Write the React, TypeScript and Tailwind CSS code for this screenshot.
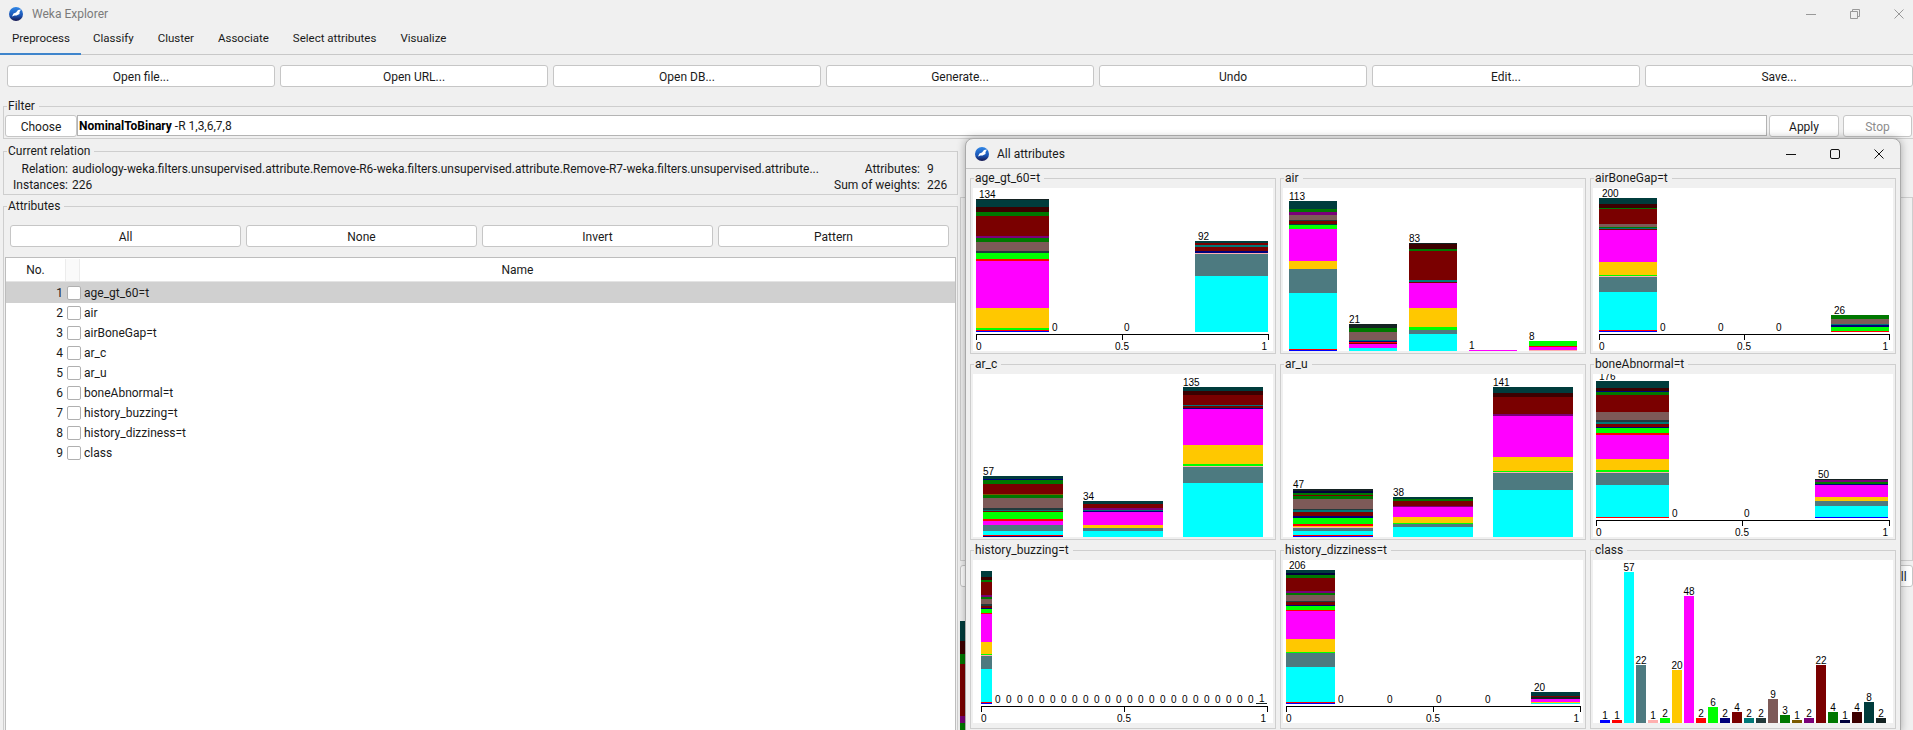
import { clsx } from 'clsx';
import type { ReactNode } from 'react';

// class colours used by the stacked bars
const cy = '#00ffff', tg = '#4d7a80', go = '#ffc800', mg = '#ff00ff', rd = '#ff0000', lm = '#00ff00';
const ma = '#7a0000', br = '#7d5a58', dg = '#007800', pu = '#7a0078', te = '#007878', na = '#00007a';
const dm = '#3c0000', dt = '#003c3c', dk = '#142222', bl = '#0000ff', pk = '#ffafaf', ol = '#7a5a00';
const sl = '#223a3c', nd = '#00003c';

type Seg = [string, number];
type Bar = { x: number; w: number; label?: string; segs: Seg[] };
type Chart = {
  title: string;
  bottom: number;
  dx: number;
  bars: Bar[];
  zeros?: number[];
  axis?: { x0: number; x1: number; mid: number };
  centered?: boolean;
};

const classCounts: [string, string, number][] = [
  [bl, '1', 3], [rd, '1', 3], [cy, '57', 151], [tg, '22', 58], [pk, '1', 3], [lm, '2', 5], [go, '20', 53], [mg, '48', 127],
  [rd, '2', 5], [lm, '6', 16], [na, '2', 5], [ma, '4', 11], [te, '2', 5], [sl, '2', 5], [br, '9', 24], [dg, '3', 8],
  [ol, '1', 3], [pu, '2', 5], [ma, '22', 58], [dg, '4', 11], [nd, '1', 3], [dm, '4', 11], [dt, '8', 21], [dk, '2', 5],
];

const charts: Chart[] = [
  {
    title: 'age_gt_60=t', bottom: 144, dx: 3, zeros: [79, 151], axis: { x0: 3, x1: 295, mid: 149 },
    bars: [
      { x: 3, w: 73, label: '134', segs: [[dk, 1], [dt, 7], [dm, 5], [dg, 4], [ma, 20], [pu, 2], [dg, 4], [br, 9], [sl, 2], [lm, 6], [rd, 2], [mg, 47], [go, 20], [lm, 2], [rd, 1], [bl, 1]] },
      { x: 222, w: 73, label: '92', segs: [[dt, 2], [ma, 2], [te, 2], [ma, 4], [na, 2], [pk, 1], [tg, 22], [cy, 56]] },
    ],
  },
  {
    title: 'air', bottom: 163, dx: 0,
    bars: [
      { x: 6, w: 48, label: '113', segs: [[dt, 8], [dg, 3], [pu, 3], [br, 5], [sl, 1], [ma, 3], [dt, 1], [lm, 4], [mg, 32], [go, 8], [tg, 24], [cy, 56], [rd, 1], [bl, 1]] },
      { x: 66, w: 48, label: '21', segs: [[dk, 4], [dg, 4], [br, 8], [te, 1], [na, 1], [rd, 1], [ma, 1], [mg, 4], [cy, 3]] },
      { x: 126, w: 48, label: '83', segs: [[dk, 1], [dm, 5], [dg, 2], [ma, 29], [te, 2], [ma, 1], [mg, 25], [go, 19], [lm, 3], [tg, 4], [cy, 17]] },
      { x: 186, w: 48, label: '1', segs: [[mg, 1]] },
      { x: 246, w: 48, label: '8', segs: [[lm, 5], [rd, 1], [mg, 3], [pk, 1]] },
    ],
  },
  {
    title: 'airBoneGap=t', bottom: 144, dx: 3, zeros: [67, 125, 183], axis: { x0: 6, x1: 296, mid: 151 },
    bars: [
      { x: 6, w: 58, label: '200', segs: [[dt, 6], [dm, 4], [dg, 1], [ma, 15], [br, 3], [dg, 1], [te, 1], [ma, 1], [mg, 32], [go, 13], [lm, 1], [pk, 1], [tg, 15], [cy, 38], [rd, 1], [bl, 1]] },
      { x: 238, w: 58, label: '26', segs: [[dg, 4], [br, 5], [te, 1], [na, 2], [lm, 4], [rd, 1]] },
    ],
  },
  {
    title: 'ar_c', bottom: 163, dx: 0,
    bars: [
      { x: 10, w: 80, label: '57', segs: [[dt, 3], [na, 1], [dg, 4], [ma, 10], [ol, 1], [dg, 3], [br, 10], [sl, 2], [te, 1], [ma, 1], [lm, 7], [rd, 2], [mg, 4], [tg, 6], [cy, 4], [rd, 1], [na, 1]] },
      { x: 110, w: 80, label: '34', segs: [[dt, 3], [ma, 4], [pu, 2], [te, 1], [na, 1], [mg, 13], [go, 3], [tg, 3], [cy, 6]] },
      { x: 210, w: 80, label: '135', segs: [[dt, 4], [dm, 4], [ma, 10], [te, 1], [ma, 2], [na, 1], [mg, 36], [go, 19], [lm, 2], [pk, 1], [tg, 16], [cy, 54]] },
    ],
  },
  {
    title: 'ar_u', bottom: 163, dx: 0,
    bars: [
      { x: 10, w: 80, label: '47', segs: [[dk, 2], [nd, 2], [dg, 2], [ma, 1], [dg, 3], [br, 10], [sl, 1], [te, 2], [ma, 4], [na, 2], [lm, 6], [rd, 2], [go, 1], [pk, 1], [tg, 3], [cy, 4], [rd, 1], [bl, 1]] },
      { x: 110, w: 80, label: '38', segs: [[dt, 2], [dg, 2], [ma, 5], [pu, 1], [mg, 10], [go, 6], [lm, 1], [tg, 3], [cy, 10]] },
      { x: 210, w: 80, label: '141', segs: [[dt, 6], [dm, 4], [ma, 17], [pu, 2], [mg, 41], [go, 14], [lm, 1], [pk, 1], [tg, 17], [cy, 47]] },
    ],
  },
  {
    title: 'boneAbnormal=t', bottom: 144, dx: 3, zeros: [79, 151], axis: { x0: 3, x1: 296, mid: 149 },
    bars: [
      { x: 3, w: 73, label: '176', segs: [[dt, 7], [dm, 3], [na, 1], [dg, 3], [ma, 17], [br, 8], [sl, 2], [te, 2], [ma, 3], [na, 1], [lm, 5], [rd, 2], [mg, 24], [go, 11], [lm, 2], [pk, 1], [tg, 12], [cy, 32], [rd, 1]] },
      { x: 222, w: 73, label: '50', segs: [[dk, 1], [pu, 2], [dg, 2], [na, 1], [mg, 12], [go, 4], [tg, 5], [cy, 11], [bl, 1]] },
    ],
  },
  {
    title: 'history_buzzing=t', bottom: 144, dx: 3, zeros: Array.from({ length: 24 }, (_, i) => 22 + i * 11), axis: { x0: 8, x1: 294, mid: 151 },
    bars: [
      { x: 8, w: 11, segs: [[dt, 6], [dm, 3], [dg, 2], [ma, 13], [pu, 2], [dg, 2], [br, 5], [sl, 2], [ma, 2], [na, 1], [lm, 4], [rd, 1], [mg, 28], [go, 12], [lm, 1], [pk, 1], [tg, 13], [cy, 33], [rd, 1], [bl, 1]] },
      { x: 283, w: 11, label: '1', segs: [[dk, 1]] },
    ],
  },
  {
    title: 'history_dizziness=t', bottom: 144, dx: 3, zeros: [55, 104, 153, 202], axis: { x0: 3, x1: 297, mid: 150 },
    bars: [
      { x: 3, w: 49, label: '206', segs: [[dt, 3], [nd, 2], [dg, 3], [ma, 13], [pu, 2], [dg, 2], [br, 6], [sl, 1], [ma, 3], [na, 1], [lm, 4], [rd, 1], [mg, 28], [go, 13], [lm, 1], [tg, 14], [cy, 35], [rd, 1], [bl, 1]] },
      { x: 248, w: 49, label: '20', segs: [[dt, 4], [ma, 1], [dk, 2], [mg, 3], [go, 1], [cy, 1]] },
    ],
  },
  {
    title: 'class', bottom: 163, dx: 0, centered: true,
    bars: classCounts.map(([color, label, h], i) => ({ x: 7 + i * 12, w: 10, label, segs: [[color, h]] as Seg[] })),
  },
];

const attributes = ['age_gt_60=t', 'air', 'airBoneGap=t', 'ar_c', 'ar_u', 'boneAbnormal=t', 'history_buzzing=t', 'history_dizziness=t', 'class'];
const tabs = ['Preprocess', 'Classify', 'Cluster', 'Associate', 'Select attributes', 'Visualize'];
const topButtons = ['Open file...', 'Open URL...', 'Open DB...', 'Generate...', 'Undo', 'Edit...', 'Save...'];

function WekaIcon({ id }: { id: string }) {
  return (
    <svg width="14" height="14" viewBox="0 0 14 14" className="shrink-0">
      <defs>
        <linearGradient id={id} x1="0" y1="0" x2="0" y2="1">
          <stop offset="0" stopColor="#2f86e6" />
          <stop offset="0.6" stopColor="#1b55b5" />
          <stop offset="1" stopColor="#17174f" />
        </linearGradient>
      </defs>
      <circle cx="7" cy="7" r="7" fill={`url(#${id})`} />
      <path d="M3 9.5 L4.5 6.5 L7 5.5 L9 3 L12 2.5 L10.5 5 L10.5 7 L7.5 8.5 L5.5 8.5 Z" fill="#fff" />
    </svg>
  );
}

function Group({ title, className, children }: { title: string; className?: string; children: ReactNode }) {
  return (
    <fieldset className={clsx('min-w-0 border border-[#cecece]', className)}>
      <legend className="ml-[3px] pl-px pr-1 text-xs leading-4">{title}</legend>
      {children}
    </fieldset>
  );
}

function Btn({ children, className }: { children: ReactNode; className?: string }) {
  return (
    <button type="button" className={clsx('h-[22px] rounded-[3px] border border-[#c6c6c6] bg-white pt-px text-center text-xs text-[#1a1a1a]', className)}>
      {children}
    </button>
  );
}

function Plot({ chart }: { chart: Chart }) {
  const { axis } = chart;
  return (
    <svg width="300" height="163" className="block bg-white" fontFamily="'Liberation Sans', sans-serif" fontSize="10" shapeRendering="crispEdges">
      {chart.bars.map((bar) => {
        const total = bar.segs.reduce((sum, s) => sum + s[1], 0);
        let y = chart.bottom - total;
        return (
          <g key={bar.x}>
            {bar.label && (
              <text x={chart.centered ? bar.x + bar.w / 2 : bar.x + chart.dx} y={y - 1} textAnchor={chart.centered ? 'middle' : 'start'}>
                {bar.label}
              </text>
            )}
            {bar.segs.map(([color, h], i) => {
              const rect = <rect key={i} x={bar.x} y={y} width={bar.w} height={h} fill={color} />;
              y += h;
              return rect;
            })}
          </g>
        );
      })}
      {chart.zeros?.map((x) => (
        <text key={x} x={x} y={143}>0</text>
      ))}
      {axis && (
        <g>
          <rect x={axis.x0} y={146} width={axis.x1 - axis.x0 + 1} height={1} fill="#000" />
          <rect x={axis.x0} y={146} width={1} height={6} fill="#000" />
          <rect x={axis.mid} y={146} width={1} height={6} fill="#000" />
          <rect x={axis.x1} y={146} width={1} height={6} fill="#000" />
          <text x={axis.x0} y={162}>0</text>
          <text x={axis.mid} y={162} textAnchor="middle">0.5</text>
          <text x={axis.x1 - 1} y={162} textAnchor="end">1</text>
        </g>
      )}
    </svg>
  );
}

function AllAttributesWindow() {
  return (
    <div className="absolute left-[965px] top-[138px] h-[594px] w-[936px] rounded-t-lg border border-[#a9a9a9] bg-[#f0f0f0] shadow-[0_0_8px_rgba(0,0,0,0.3)]">
      <div className="flex h-[30px] items-center border-b border-[#c4c4c4] pl-[9px] pr-4">
        <WekaIcon id="weka-popup" />
        <span className="ml-2 text-xs text-[#1a1a1a]">All attributes</span>
        <div className="ml-auto flex items-center gap-[34px]">
          <svg width="10" height="10" viewBox="0 0 10 10"><path d="M0 5.5H10" stroke="#111" /></svg>
          <svg width="10" height="10" viewBox="0 0 10 10"><rect x="0.5" y="0.5" width="9" height="9" rx="1.5" fill="none" stroke="#111" /></svg>
          <svg width="10" height="10" viewBox="0 0 10 10"><path d="M0.5 0.5L9.5 9.5M9.5 0.5L0.5 9.5" stroke="#111" /></svg>
        </div>
      </div>
      <div className="ml-1 mt-px grid grid-cols-[306px_306px_306px] grid-rows-[184px_184px_187px] gap-x-1 gap-y-[2px]">
        {charts.map((chart) => (
          <Group key={chart.title} title={chart.title}>
            <div className="px-[2px] pt-[2px]">
              <Plot chart={chart} />
            </div>
          </Group>
        ))}
      </div>
    </div>
  );
}

export default function App() {
  return (
    <div className="relative h-[730px] w-[1913px] overflow-hidden bg-[#f0f0f0] font-['Roboto',sans-serif] text-xs text-[#1a1a1a]">
      <div className="flex h-[27px] items-center pl-[9px] pr-[9px]">
        <WekaIcon id="weka-main" />
        <span className="ml-[9px] text-[#7b7b7b]">Weka Explorer</span>
        <div className="ml-auto flex items-center gap-[34px]">
          <svg width="10" height="10" viewBox="0 0 10 10"><path d="M0 5.5H10" stroke="#999" /></svg>
          <svg width="10" height="10" viewBox="0 0 10 10"><path d="M0.5 2.5H7.5V9.5H0.5ZM2.5 2.5V0.5H9.5V7.5H7.5" fill="none" stroke="#999" /></svg>
          <svg width="10" height="10" viewBox="0 0 10 10"><path d="M0.5 0.5L9.5 9.5M9.5 0.5L0.5 9.5" stroke="#999" /></svg>
        </div>
      </div>

      <div className="flex h-[28px] border-b border-[#c8c8c8] text-[11.5px]">
        {tabs.map((tab, i) => (
          <div key={tab} className={clsx('flex items-center px-3 pb-[3px]', i === 0 && '-mb-px w-[81px] border-b-2 border-[#3f85cc]')}>
            {tab}
          </div>
        ))}
      </div>

      <div className="mt-[10px] grid grid-cols-7 gap-[5px] pl-[7px]">
        {topButtons.map((label) => (
          <Btn key={label}>{label}</Btn>
        ))}
      </div>

      <Group title="Filter" className="-mr-[2px] ml-[3px] mt-[11px]">
        <div className="flex h-[24px] items-start pl-px pt-px">
          <Btn className="h-[21px] w-[72px] shrink-0">Choose</Btn>
          <div className="flex h-[21px] min-w-0 flex-1 items-center border border-[#b4b4b4] bg-white pl-px">
            <span className="font-bold text-black">NominalToBinary</span>
            <span className="whitespace-pre"> -R 1,3,6,7,8</span>
          </div>
          <Btn className="ml-[2px] h-[21px] w-[70px] shrink-0">Apply</Btn>
          <Btn className="ml-1 mr-[2px] h-[21px] w-[69px] shrink-0 bg-[#f0f0f0] text-[#8c8c8c]">Stop</Btn>
        </div>
      </Group>

      <div className="flex">
        <div className="ml-[3px] w-[955px] shrink-0">
          <Group title="Current relation" className="mt-1 h-[52px]">
            <div className="flex justify-between pr-3 pt-[2px]">
              <div className="grid grid-cols-[64px_auto] gap-x-[4px] leading-4">
                <span className="text-right">Relation:</span>
                <span className="whitespace-nowrap text-[11.95px]">audiology-weka.filters.unsupervised.attribute.Remove-R6-weka.filters.unsupervised.attribute.Remove-R7-weka.filters.unsupervised.attribute...</span>
                <span className="text-right">Instances:</span>
                <span>226</span>
              </div>
              <div className="grid grid-cols-[auto_18px] gap-x-[7px] leading-4">
                <span className="text-right">Attributes:</span>
                <span>9</span>
                <span className="text-right">Sum of weights:</span>
                <span>226</span>
              </div>
            </div>
          </Group>

          <Group title="Attributes" className="mt-[3px] h-[560px]">
            <div className="ml-[6px] mr-[8px] mt-[11px] grid grid-cols-4 gap-[5px]">
              {['All', 'None', 'Invert', 'Pattern'].map((label) => (
                <Btn key={label}>{label}</Btn>
              ))}
            </div>
            <div className="mx-px mt-[10px] h-[480px] border border-[#bdbdbd] bg-white">
              <div className="flex h-[24px] items-center border-b border-[#e4e4e4] bg-white pt-px">
                <div className="w-[59px] text-center">No.</div>
                <div className="h-full w-[15px] border-x border-[#ececec] bg-[#fafafa]" />
                <div className="flex-1 text-center">Name</div>
              </div>
              {attributes.map((name, i) => (
                <div key={name} className={clsx('flex h-5 items-center', i === 0 && 'h-[21px] bg-[#d0d0d0]')}>
                  <span className="w-[57px] text-right">{i + 1}</span>
                  <span className="ml-1 h-[14px] w-[14px] rounded-[2px] border border-[#b0b0b0] bg-white" />
                  <span className="ml-[3px]">{name}</span>
                </div>
              ))}
            </div>
          </Group>
        </div>

        {/* right column: mostly hidden behind the floating window */}
        <div className="ml-[2px] min-w-0 flex-1">
          <div className="mt-[58px] h-[364px] border border-[#cecece]" />
          <Btn className="mt-1 h-[21px] w-full pl-[881px] text-left">Visualize All</Btn>
          <div className="mt-[34px] flex w-20 flex-col">
            <div className="h-5 bg-[#003c3c]" />
            <div className="h-[13px] bg-[#3c0000]" />
            <div className="h-[10px] bg-[#007800]" />
            <div className="h-[52px] bg-[#7a0000]" />
            <div className="h-[7px] bg-[#7a0078]" />
            <div className="h-3 bg-[#007800]" />
          </div>
        </div>
      </div>

      <AllAttributesWindow />
    </div>
  );
}
